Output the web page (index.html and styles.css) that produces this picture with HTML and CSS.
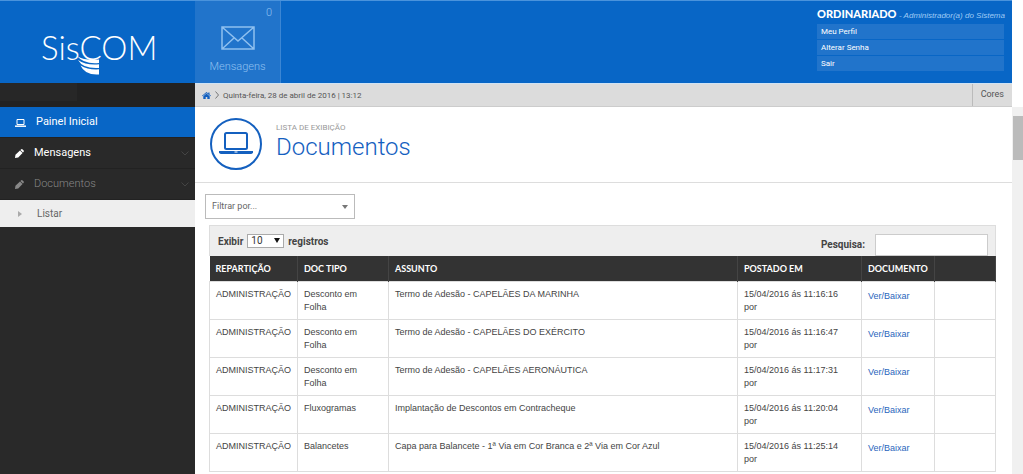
FILE: index.html
```html
<!DOCTYPE html>
<html lang="pt-BR">
<head>
<meta charset="utf-8">
<title>SisCOM - Documentos</title>
<link rel="stylesheet" href="styles.css">
</head>
<body>
<div class="app">
  <header class="topbar">
    <div class="brand">
      <span class="logo">SisCOM
        <svg class="logo-swoosh" width="22" height="19" viewBox="0 0 22 19" aria-hidden="true">
          <path fill="#fff" d="M0 0Q8 5 22 3.500V7Q7 8.500 0 0ZM1 4Q9 9.500 22 8.300V12Q6 13 1 4ZM3.500 9.500Q11 14 22 13.300V18.500Q8 19.500 3.500 9.500Z"/>
        </svg>
      </span>
    </div>
    <a class="tile" href="#">
      <span class="tile-count">0</span>
      <svg width="34" height="24" viewBox="0 0 34 24" fill="none" stroke="currentColor" stroke-width="1.500" aria-hidden="true">
        <path d="M1 1H33V23H1ZM1 1L17 15L33 1M1 23L13 12M33 23L21 12"/>
      </svg>
      <span class="tile-label">Mensagens</span>
    </a>
    <div class="account">
      <div class="account-name"><strong>ORDINARIADO</strong> <em>- Administrador(a) do Sistema</em></div>
      <nav class="account-links">
        <a href="#">Meu Perfil</a>
        <a href="#">Alterar Senha</a>
        <a href="#">Sair</a>
      </nav>
    </div>
  </header>

  <aside class="sidebar">
    <div class="sidebar-top"><div class="sidebar-user"></div></div>
    <nav class="menu">
      <a class="item active" href="#">
        <svg class="item-icon" viewBox="0 0 11 9" fill="none" stroke="currentColor" aria-hidden="true"><path d="M2 1.500H9V6.500H2Z"/><path d="M0 8.200H11" stroke-width="1.500"/></svg>
        <span>Painel Inicial</span>
      </a>
      <a class="item" href="#">
        <svg class="item-icon pencil" viewBox="0 0 10 10" fill="currentColor" aria-hidden="true"><path d="M0 10L.5 6.400L5.500 1.600L8.400 4.500L3.600 9.500ZM6 1.100L7 .3Q7.800-.2 8.500.5L9.600 1.600Q10.200 2.300 9.600 3L8.900 4Z"/></svg>
        <span>Mensagens</span>
        <svg class="chevron" viewBox="0 0 8 5" fill="none" stroke="currentColor" aria-hidden="true"><path d="M.5.5L4 4L7.500.5"/></svg>
      </a>
      <a class="item muted" href="#">
        <svg class="item-icon pencil" viewBox="0 0 10 10" fill="currentColor" aria-hidden="true"><path d="M0 10L.5 6.400L5.500 1.600L8.400 4.500L3.600 9.500ZM6 1.100L7 .3Q7.800-.2 8.500.5L9.600 1.600Q10.200 2.300 9.600 3L8.900 4Z"/></svg>
        <span>Documentos</span>
        <svg class="chevron" viewBox="0 0 8 5" fill="none" stroke="currentColor" aria-hidden="true"><path d="M.5.5L4 4L7.500.5"/></svg>
      </a>
      <a class="subitem" href="#">
        <svg width="4" height="6" viewBox="0 0 4 6" aria-hidden="true"><path fill="#aaa" d="M0 0L4 3L0 6Z"/></svg>
        <span>Listar</span>
      </a>
    </nav>
  </aside>

  <div class="crumbs">
    <a class="home" href="#" aria-label="Início"><svg width="9" height="7" viewBox="0 0 9 7" aria-hidden="true"><path fill="#1260c0" d="M4.500 0L6.300 1.500V.5H7.500V2.500L9 3.700L8.500 4.200L4.500 1L.5 4.200L0 3.700ZM1.300 4.200L4.500 1.600L7.700 4.200V7H5.300V5H3.700V7H1.300Z"/></svg></a>
    <svg width="4" height="8" viewBox="0 0 4 8" fill="none" stroke="#777" aria-hidden="true"><path d="M.5.5L3.500 4L.5 7.500"/></svg>
    <span>Quinta-feira, 28 de abril de 2016 | 13:12</span>
    <a class="colors" href="#">Cores</a>
  </div>

  <main class="content">
    <div class="title">
      <svg width="54" height="54" viewBox="0 0 54 54" fill="none" stroke="#1460bf" aria-hidden="true">
        <circle cx="27" cy="26" r="25" stroke-width="2"/>
        <rect x="16" y="15" width="22" height="16" rx="1.500" stroke-width="2"/>
        <path fill="#1460bf" stroke="none" d="M10 33H44V34.500Q43.500 36 41.500 36H12.500Q10.500 36 10 34.500Z"/>
        <path stroke="#fff" d="M25.500 34H28.500"/>
      </svg>
      <div>
        <div class="eyebrow">LISTA DE EXIBIÇÃO</div>
        <h1>Documentos</h1>
      </div>
    </div>
    <div class="body">
      <button class="filter" type="button">Filtrar por...
        <svg width="6" height="4" viewBox="0 0 6 4" aria-hidden="true"><path fill="#777" d="M0 0H6L3 4Z"/></svg>
      </button>
      <div class="panel">
        <div class="tools">
          <div class="length">
            <label for="len">Exibir</label>
            <span class="select"><select id="len"><option>10</option><option>25</option></select><svg width="6" height="5" viewBox="0 0 6 5" aria-hidden="true"><path fill="#111" d="M0 0H6L3 5Z"/></svg></span>
            <label for="len">registros</label>
          </div>
          <div class="search"><label for="q">Pesquisa:</label><input id="q" type="text"></div>
        </div>
        <table>
          <colgroup><col class="c-rep"><col class="c-tipo"><col><col class="c-data"><col class="c-doc"><col class="c-end"></colgroup>
          <thead><tr><th>REPARTIÇÃO</th><th>DOC TIPO</th><th>ASSUNTO</th><th>POSTADO EM</th><th>DOCUMENTO</th><th></th></tr></thead>
          <tbody>
            <tr><td>ADMINISTRAÇÃO</td><td>Desconto em Folha</td><td>Termo de Adesão - CAPELÃES DA MARINHA</td><td>15/04/2016 ás 11:16:16<br>por</td><td class="doc"><a href="#">Ver/Baixar</a></td><td></td></tr>
            <tr><td>ADMINISTRAÇÃO</td><td>Desconto em Folha</td><td>Termo de Adesão - CAPELÃES DO EXÉRCITO</td><td>15/04/2016 ás 11:16:47<br>por</td><td class="doc"><a href="#">Ver/Baixar</a></td><td></td></tr>
            <tr><td>ADMINISTRAÇÃO</td><td>Desconto em Folha</td><td>Termo de Adesão - CAPELÃES AERONÁUTICA</td><td>15/04/2016 ás 11:17:31<br>por</td><td class="doc"><a href="#">Ver/Baixar</a></td><td></td></tr>
            <tr><td>ADMINISTRAÇÃO</td><td>Fluxogramas</td><td>Implantação de Descontos em Contracheque</td><td>15/04/2016 ás 11:20:04<br>por</td><td class="doc"><a href="#">Ver/Baixar</a></td><td></td></tr>
            <tr><td>ADMINISTRAÇÃO</td><td>Balancetes</td><td>Capa para Balancete - 1ª Via em Cor Branca e 2ª Via em Cor Azul</td><td>15/04/2016 ás 11:25:14<br>por</td><td class="doc"><a href="#">Ver/Baixar</a></td><td></td></tr>
          </tbody>
        </table>
      </div>
    </div>
  </main>
  <div class="track"><div class="thumb"></div></div>
</div>
</body>
</html>
```
FILE: styles.css
```css
* { box-sizing: border-box; }
body { margin: 0; background: #fff; color: #444; font: 9px/13px "Liberation Sans", Arial, sans-serif; }
a { color: inherit; text-decoration: none; }
.app { display: grid; grid-template-columns: 195px minmax(0, 1fr) 11px; grid-template-rows: 83px 24px minmax(0, 1fr); height: 100vh; overflow: hidden; }

.topbar { grid-column: 1 / 3; grid-row: 1; display: flex; background: #0866c6; border-top: 1px solid #4a93dc; color: #fff; }
.brand { width: 195px; padding: 23px 0 0 41px; }
.logo { position: relative; display: inline-block; font: 300 33px/46px Lato, sans-serif; }
.logo-swoosh { position: absolute; left: 36px; top: 32px; }
.tile { width: 86px; background: #2174cb; border-right: 1px solid #3b86d4; color: #8fc0f0; display: flex; flex-direction: column; align-items: center; padding-top: 5px; font: 300 11px/13px Roboto, sans-serif; }
.tile-count { align-self: flex-end; padding-right: 8px; margin-bottom: 7px; }
.tile-label { margin-top: 10px; }
.account { margin-left: auto; margin-right: 8px; width: 187px; padding-top: 5px; }
.account-name { line-height: 15px; padding-bottom: 1px; white-space: nowrap; }
.account-name strong { font: 900 11px/15px Lato, sans-serif; }
.account-name em { color: #9fcbf5; font: italic 8px/15px "Liberation Sans", sans-serif; }
.account-links { display: flex; flex-direction: column; gap: 1px; }
.account-links a { background: #2174cb; padding: 0 4px; font: 8px/15px Roboto, sans-serif; }

.sidebar { grid-column: 1; grid-row: 2 / 4; background: #292929; }
.sidebar-top { height: 24px; background: #222; }
.sidebar-user { width: 77px; height: 18px; background: #272727; }
.menu { font: 11px/30px Roboto, sans-serif; color: #fff; }
.item { display: flex; align-items: center; gap: 10px; height: 31px; padding: 0 6px 0 15px; border-bottom: 1px solid #222; }
.item.active { background: #0866c6; }
.item.muted { color: #888; font-weight: 300; }
.item-icon { width: 11px; height: 9px; }
.item-icon.pencil { width: 9px; height: 9px; }
.chevron { width: 8px; height: 5px; margin-left: auto; color: #444; }
.subitem { display: flex; align-items: center; gap: 15px; height: 27px; padding-left: 18px; background: #eee; color: #666; font-size: 10px; }

.crumbs { grid-column: 2; grid-row: 2; display: flex; align-items: center; gap: 4px; padding-left: 7px; background: #dcdcdc; border-top: 1px solid #cfe3f5; border-bottom: 1px solid #ccc; color: #555; font: 8px/13px Roboto, sans-serif; }
.home { display: flex; }
.colors { margin-left: auto; align-self: stretch; padding: 4px 8px; border-left: 1px solid #bbb; font-size: 9px; }

.content { grid-column: 2; grid-row: 3; overflow: hidden; }
.title { display: flex; align-items: flex-start; gap: 13px; height: 76px; padding: 11px 14px; border-bottom: 1px solid #ddd; }
.eyebrow { margin-top: 3px; color: #999; font: 8px/13px Roboto, sans-serif; }
h1 { margin: 0; color: #1460bf; font: 300 24px/26px Roboto, sans-serif; }
.body { padding: 11px 16px 0 10px; }
.filter { display: flex; align-items: center; justify-content: space-between; width: 150px; height: 25px; padding: 0 6px; background: #fff; border: 1px solid #bbb; color: #666; font: 9px/13px Roboto, sans-serif; }
.panel { margin: 6px 0 0 4px; }
.tools { display: flex; justify-content: space-between; height: 31px; padding: 8px 7px 0 8px; background: #eee; border: 1px solid #ddd; border-bottom: 0; font: 700 10px/16px Roboto, sans-serif; }
.length { display: flex; gap: 4px; }
.select { position: relative; display: flex; }
.select select { width: 37px; height: 14px; padding: 0 3px; appearance: none; border: 1px solid #aaa; border-radius: 0; background: #fff; color: #333; font: 10px/12px Roboto, sans-serif; }
.select svg { position: absolute; right: 4px; top: 4px; pointer-events: none; }
.search { display: flex; gap: 10px; line-height: 22px; }
.search input { width: 113px; height: 22px; border: 1px solid #ccc; background: #fff; }

table { width: 100%; table-layout: fixed; border-collapse: collapse; }
.c-rep { width: 88px; } .c-tipo { width: 91px; } .c-data { width: 124px; } .c-doc { width: 73px; } .c-end { width: 61px; }
th { height: 25px; padding: 0 6px; background: #333; border-right: 1px solid #444; color: #fff; text-align: left; font: 700 9px/13px Lato, sans-serif; }
td { height: 38px; padding: 6px 6px 5px; border: 1px solid #ddd; vertical-align: top; }
td:first-child { white-space: nowrap; }
td.doc { padding-top: 8px; color: #2a66bd; }

.track { grid-column: 3; grid-row: 3; padding: 9px 0 9px 1px; background: #f0f0f0; }
.thumb { height: 44px; background: #bbb; }
```
